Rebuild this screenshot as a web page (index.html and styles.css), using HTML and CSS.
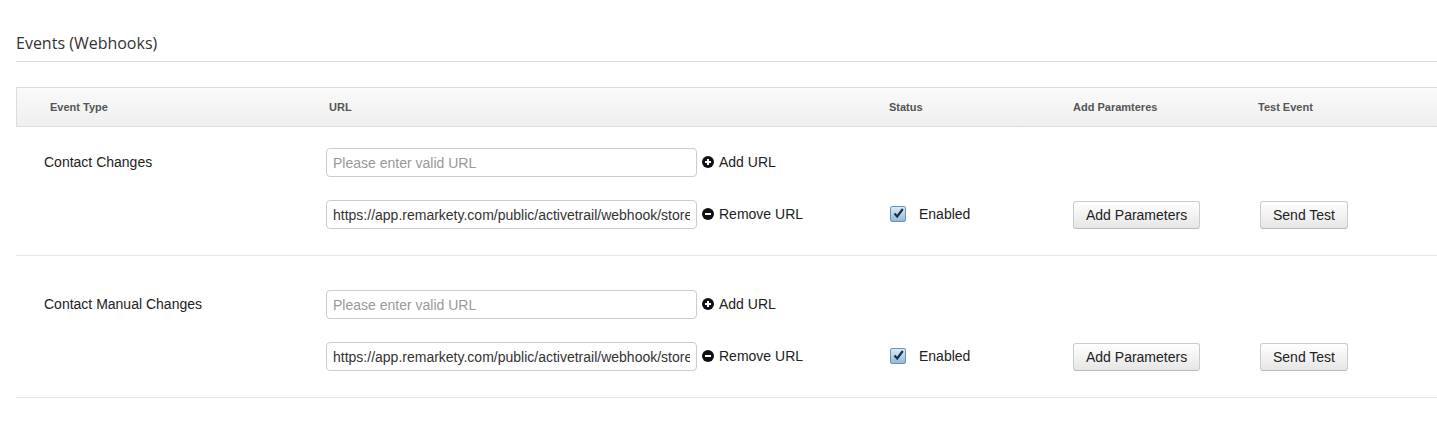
FILE: index.html
```html
<!DOCTYPE html>
<html lang="en">
<head>
<meta charset="UTF-8">
<title>Events (Webhooks)</title>
<link rel="stylesheet" href="styles.css">
</head>
<body>
<div class="section">
  <h2 class="section-title">Events (Webhooks)</h2>

  <div class="table">
    <div class="table-head row-grid">
      <div class="th th-type">Event Type</div>
      <div class="th th-url">URL</div>
      <div class="th">Status</div>
      <div class="th">Add Paramteres</div>
      <div class="th">Test Event</div>
    </div>

    <div class="table-row row-grid first">
      <div class="event-name">Contact Changes</div>
      <div class="url-cell">
        <div class="url-line">
          <input class="url-input" type="text" placeholder="Please enter valid URL">
          <a class="url-action" href="#"><span class="round-icon plus"></span>Add URL</a>
        </div>
        <div class="url-line">
          <input class="url-input" type="text" value="https://app.remarkety.com/public/activetrail/webhook/store">
          <a class="url-action" href="#"><span class="round-icon minus"></span>Remove URL</a>
        </div>
      </div>
      <div class="status-cell">
        <label class="check"><span class="check-box"><svg width="15" height="15" viewBox="0 0 15 15"><path d="M3.5 7.5 L6.2 10.5 L11.8 3" fill="none" stroke="#17314d" stroke-width="2.2"/></svg></span>Enabled</label>
      </div>
      <div class="btn-cell"><button class="btn btn-params">Add Parameters</button></div>
      <div class="btn-cell"><button class="btn btn-test">Send Test</button></div>
    </div>

    <div class="table-row row-grid">
      <div class="event-name">Contact Manual Changes</div>
      <div class="url-cell">
        <div class="url-line">
          <input class="url-input" type="text" placeholder="Please enter valid URL">
          <a class="url-action" href="#"><span class="round-icon plus"></span>Add URL</a>
        </div>
        <div class="url-line">
          <input class="url-input" type="text" value="https://app.remarkety.com/public/activetrail/webhook/store">
          <a class="url-action" href="#"><span class="round-icon minus"></span>Remove URL</a>
        </div>
      </div>
      <div class="status-cell">
        <label class="check"><span class="check-box"><svg width="15" height="15" viewBox="0 0 15 15"><path d="M3.5 7.5 L6.2 10.5 L11.8 3" fill="none" stroke="#17314d" stroke-width="2.2"/></svg></span>Enabled</label>
      </div>
      <div class="btn-cell"><button class="btn btn-params">Add Parameters</button></div>
      <div class="btn-cell"><button class="btn btn-test">Send Test</button></div>
    </div>
  </div>
</div>
</body>
</html>
```

FILE: styles.css
```css
body {
  margin: 0;
  background-color: #fff;
  font-family: "Liberation Sans", Arial, sans-serif;
  color: #333;
}

.section {
  padding: 32px 0 0 16px;
}

.section-title {
  margin: 0;
  padding-bottom: 7px;
  font-family: "Open Sans", sans-serif;
  font-size: 16px;
  font-weight: normal;
  line-height: 22px;
  color: #333;
  border-bottom: 1px solid #ddd;
}

.table {
  margin-top: 25px;
}

.row-grid {
  display: grid;
  grid-template-columns: 310px 562px 184px 185px 1fr;
}

.table-head {
  height: 38px;
  align-items: center;
  background: linear-gradient(to bottom, #fafafa, #efefef);
  border: 1px solid #ddd;
  border-right: none;
}

.th {
  font-size: 11px;
  font-weight: bold;
  color: #555;
}

.th-type {
  padding-left: 33px;
}

.th-url {
  padding-left: 2px;
}

.table-row {
  padding: 21px 0 26px;
  border-bottom: 1px solid #e6e6e6;
}

.table-row + .table-row {
  padding-top: 34px;
}

.event-name {
  padding: 6px 0 0 28px;
  font-size: 14px;
  line-height: 17px;
  color: #222;
}

.url-cell {
  display: flex;
  flex-direction: column;
  gap: 23px;
}

.url-line {
  display: flex;
  align-items: center;
  height: 29px;
}

.url-input {
  box-sizing: border-box;
  width: 371px;
  height: 29px;
  padding: 0 6px;
  border: 1px solid #ccc;
  border-radius: 4px;
  font-family: "Liberation Sans", Arial, sans-serif;
  font-size: 14px;
  color: #333;
  outline: none;
}

.url-input::placeholder {
  color: #999;
}

.url-action {
  display: flex;
  align-items: center;
  margin: -2px 0 0 5px;
  font-size: 14px;
  color: #222;
  text-decoration: none;
}

.round-icon {
  position: relative;
  width: 12px;
  height: 12px;
  margin-right: 5px;
  border-radius: 50%;
  background-color: #111;
}

.round-icon::before,
.round-icon.plus::after {
  content: "";
  position: absolute;
  left: 3px;
  top: 5px;
  width: 6px;
  height: 2px;
  background-color: #fff;
}

.round-icon.plus::after {
  left: 5px;
  top: 3px;
  width: 2px;
  height: 6px;
}

.status-cell,
.btn-cell {
  display: flex;
  align-items: center;
  align-self: end;
  height: 29px;
}

.check {
  display: flex;
  align-items: center;
  padding-left: 2px;
  margin-top: -2px;
  font-size: 14px;
  color: #222;
}

.check-box {
  display: flex;
  box-sizing: border-box;
  width: 16px;
  height: 16px;
  margin-right: 13px;
  border: 1px solid #6a93b3;
  border-radius: 2px;
  background: linear-gradient(to bottom, #dbeaf6, #92bad8);
}

.check-box svg {
  margin: -0.5px;
}

.btn {
  box-sizing: border-box;
  height: 28px;
  margin-top: 1px;
  padding: 0 12px;
  border: 1px solid #ccc;
  border-bottom-color: #bbb;
  border-radius: 3px;
  background: linear-gradient(to bottom, #fff, #e6e6e6);
  font-family: "Liberation Sans", Arial, sans-serif;
  font-size: 14px;
  color: #222;
  white-space: nowrap;
  cursor: pointer;
}

.btn-params {
  margin-left: 1px;
  width: 127px;
}

.btn-test {
  margin-left: 3px;
  width: 88px;
}
```
